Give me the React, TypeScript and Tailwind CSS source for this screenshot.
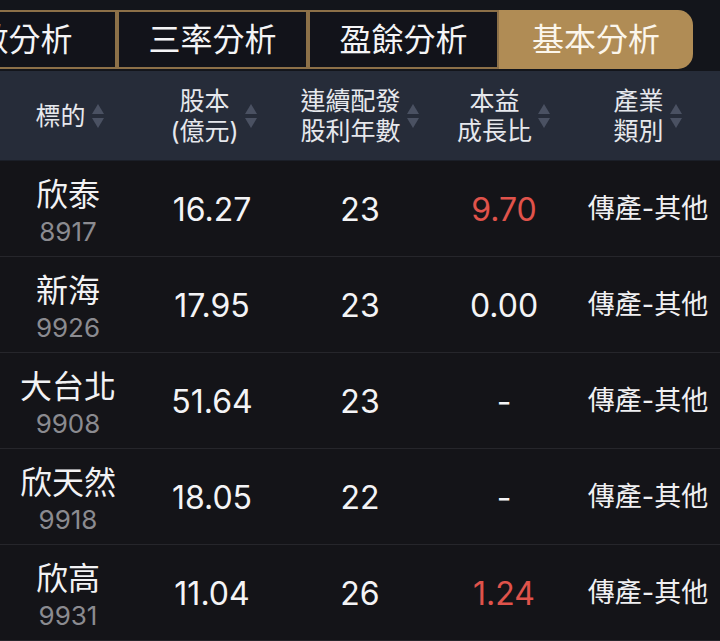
import React from "react";

/* ── Data ── */

type Row = {
  name: string;
  code: string;
  capital: string;
  years: string;
  peg: string;
  pegRed?: boolean;
  industry: string;
};

const ROWS: Row[] = [
  { name: "欣泰", code: "8917", capital: "16.27", years: "23", peg: "9.70", pegRed: true, industry: "傳產-其他" },
  { name: "新海", code: "9926", capital: "17.95", years: "23", peg: "0.00", industry: "傳產-其他" },
  { name: "大台北", code: "9908", capital: "51.64", years: "23", peg: "-", industry: "傳產-其他" },
  { name: "欣天然", code: "9918", capital: "18.05", years: "22", peg: "-", industry: "傳產-其他" },
  { name: "欣高", code: "9931", capital: "11.04", years: "26", peg: "1.24", pegRed: true, industry: "傳產-其他" },
];

const TABS = ["數分析", "三率分析", "盈餘分析", "基本分析"];

const FONT = { fontFamily: 'Inter, "Noto Sans CJK TC", "Noto Sans", sans-serif' };

/* ── Bits ── */

function SortArrows() {
  return (
    <svg width="14" height="26" viewBox="0 0 14 26" className="shrink-0">
      <path d="M7 1 L13 11 L1 11 Z" fill="#4a5162" />
      <path d="M7 25 L13 15 L1 15 Z" fill="#4a5162" />
    </svg>
  );
}

function HeadCell({ lines }: { lines: string[] }) {
  return (
    <div className="flex items-center justify-center gap-[5px]">
      <div className="flex flex-col items-center text-[25px] leading-[30px] text-[#e6e8ed]">
        {lines.map((l) => (
          <span key={l}>{l}</span>
        ))}
      </div>
      <SortArrows />
    </div>
  );
}

export default function App() {
  return (
    <div style={FONT} className="w-[720px] h-[641px] overflow-hidden bg-[#141418] text-white">
      {/* ── Tabs ── */}
      <div className="h-[71px] bg-[#13151b] pt-[10px] flex">
        <div className="flex h-[59px] -ml-[68px]">
          {TABS.map((t, i) => {
            const active = i === TABS.length - 1;
            return (
              <div
                key={t}
                className={
                  active
                    ? "w-[194px] flex items-center justify-center rounded-r-[15px] bg-[#b08c55] text-[#fbf6ec] text-[32px]"
                    : `${i === 0 ? "w-[185px]" : "w-[191px]"} flex items-center justify-center border-2 border-[#8c7048] bg-[#12131a] text-[32px] text-[#f4f4f6]`
                }
              >
                {t}
              </div>
            );
          })}
        </div>
      </div>

      {/* ── Header ── */}
      <div className="h-[90px] bg-[#262c39] grid grid-cols-[140px_148px_144px_144px_144px] items-center border-b border-[#1b1f28]">
        <HeadCell lines={["標的"]} />
        <HeadCell lines={["股本", "(億元)"]} />
        <HeadCell lines={["連續配發", "股利年數"]} />
        <HeadCell lines={["本益", "成長比"]} />
        <HeadCell lines={["產業", "類別"]} />
      </div>

      {/* ── Rows ── */}
      {ROWS.map((r) => (
        <div
          key={r.code}
          className="h-[96px] grid grid-cols-[136px_152px_144px_144px_144px] items-center border-b border-[#26262b]"
        >
          <div className="flex flex-col items-center pt-[7px]">
            <span className="text-[32px] leading-[36px] text-[#f2f2f4]">{r.name}</span>
            <span className="text-[26px] leading-[32px] text-[#8b8b90] mt-[3px]">{r.code}</span>
          </div>
          <div className="text-center text-[32px] text-[#f4f4f6] pt-[2px]">{r.capital}</div>
          <div className="text-center text-[32px] text-[#f4f4f6] pt-[2px]">{r.years}</div>
          <div className={`text-center text-[32px] pt-[2px] ${r.pegRed ? "text-[#e0534b]" : "text-[#f4f4f6]"}`}>{r.peg}</div>
          <div className="text-center text-[27px] text-[#f0f0f2] pt-[2px]">{r.industry}</div>
        </div>
      ))}
    </div>
  );
}
